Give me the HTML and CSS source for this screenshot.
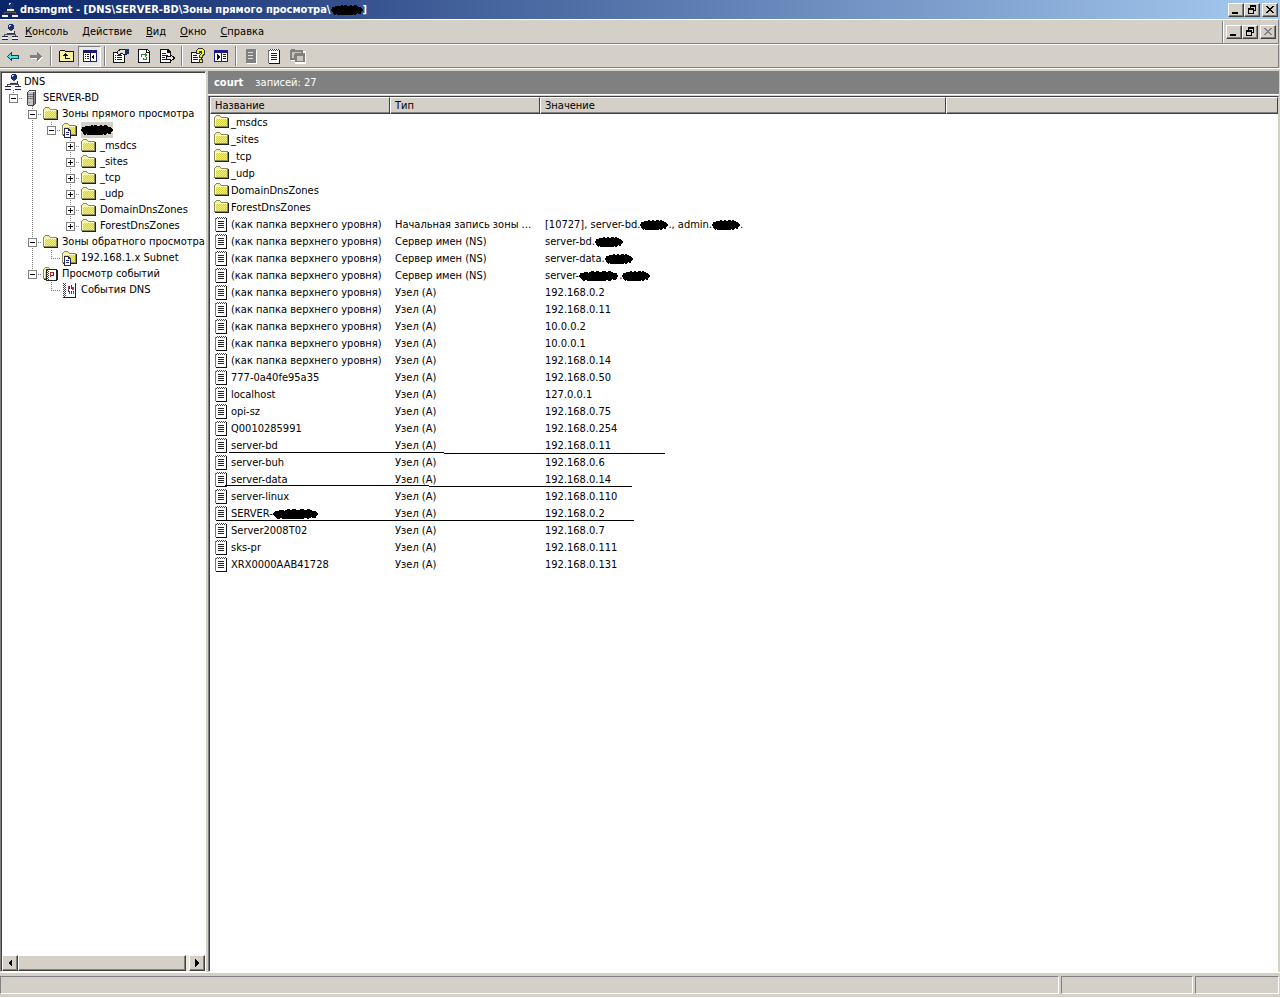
FILE: index.html
```html
<!DOCTYPE html>
<html lang="ru">
<head>
  <meta charset="UTF-8">
  <meta name="viewport" content="width=device-width, initial-scale=1.0">
  <title>dnsmgmt</title>
  <link rel="stylesheet" href="styles.css">
</head>
<body>
  <!-- icon set -->
  <svg class="sprite" aria-hidden="true">
    <defs>
      <pattern id="dither" width="2" height="2" patternUnits="userSpaceOnUse">
        <rect width="2" height="2" fill="#f4f07c"/><path d="M0 0h1v1h-1zM1 1h1v1h-1z" fill="#d6d23c"/>
      </pattern>
      <pattern id="spiral" width="2" height="2" patternUnits="userSpaceOnUse">
        <rect width="2" height="2" fill="#fff"/><path d="M0 0h1v1h-1zM1 1h1v1h-1z" fill="#444"/>
      </pattern>
    </defs>
    <symbol id="dns" viewBox="0 0 16 16">
      <circle cx="9" cy="3" r="3" fill="#17306f"/><path d="M7 1h2v1H8v1H7z" fill="#c8d8f4"/>
      <path d="M8 6h2v2H8zM2 10h12v1H2zM2 10h1v2H2zM13 10h1v2h-1z" fill="#555"/>
      <path d="M5 7h8v3H5z" fill="#e8e8f0"/><path d="M5 9h8v1H5zM12 7h1v3h-1z" fill="#333"/>
      <path d="M0 12h6v3H0zM10 12h6v3h-6z" fill="#f0f0fa"/><path d="M0 12h6v1H0zM10 12h6v1h-6zM0 15h6v1H0zM10 15h6v1h-6z" fill="#23235f"/>
    </symbol>
    <symbol id="server" viewBox="0 0 16 16">
      <path d="M4 1h1V0h7v14h-1v1h-1v1H4v-1H3V2h1z" fill="#444"/><path d="M4 2h5v13H4z" fill="#c4c4c4"/><path d="M5 1h6v1H5z" fill="#eee"/>
      <path d="M4 4h5v1H4zM4 6h5v1H4zM4 8h5v1H4z" fill="#777"/><path d="M5 12h1v1H5z" fill="#191"/>
      <path d="M10 2h1v12h-1z" fill="#8c8c8c"/>
    </symbol>
    <symbol id="folder" viewBox="0 0 16 16">
      <path d="M0 3h1V2h1V1h4v1h1v1h7v10H0z" fill="#8c8c58"/><path d="M1 4h12v8H1z" fill="url(#dither)"/>
      <path d="M2 2h4v1h1v1H1V3h1z" fill="#f6f29a"/><path d="M1 4h12v1H1zM1 4h1v8H1z" fill="#fffbc4"/>
      <path d="M14 4h1v10H1v-1h13z" fill="#222"/>
    </symbol>
    <symbol id="zone" viewBox="0 0 16 16">
      <use href="#folder"/>
      <path d="M2 6h5v1h1v1h1v8H2z" fill="#26264e"/><path d="M3 7h3v2h2v6H3z" fill="#fff"/>
      <path d="M4 10h3v1H4zM4 12h3v1H4z" fill="#2727a8"/>
    </symbol>
    <symbol id="record" viewBox="0 0 16 16">
      <path d="M2 2h11v14H2z" fill="#111"/><path d="M1 2h11v13H1z" fill="#777"/><path d="M2 3h10v12H2z" fill="#fff"/>
      <path d="M2 1h10v2H2z" fill="url(#spiral)"/>
      <path d="M4 5h6v1H4zM4 7h6v1H4zM4 9h6v1H4zM4 11h6v1H4z" fill="#222"/>
    </symbol>
    <symbol id="events" viewBox="0 0 16 16">
      <use href="#folder"/>
      <path d="M3 3h11v12H3z" fill="#222"/><path d="M4 4h9v10H4z" fill="#fff"/>
      <path d="M4 4h2v10H4z" fill="url(#spiral)"/><path d="M7 6h4v1H7zM7 6h1v5H7z" fill="#b22"/><path d="M10 6h1v4h-1zM8 9h3v1H8z" fill="#339"/>
    </symbol>
    <symbol id="eventlog" viewBox="0 0 16 16">
      <path d="M1 1h13v15H1z" fill="#222"/><path d="M2 1h11v14H2z" fill="#fff"/><path d="M1 1h3v14H1z" fill="url(#spiral)"/>
      <path d="M6 4h1v4H6zM10 5h2v3h-2zM7 9h1v3H7zM11 9h1v3h-1z" fill="#b33"/><path d="M7 4h1v3H7zM9 3h1v4H9zM9 9h1v3H9zM6 8h1v2H6z" fill="#339"/>
    </symbol>
    <symbol id="back" viewBox="0 0 16 16">
      <path d="M2.500 8.500l4-4v2.500h7v3h-7v2.500z" fill="#4fe0e0" stroke="#034a5a"/>
    </symbol>
    <symbol id="forward" viewBox="0 0 16 16">
      <path d="M15 9l-5 5v-3H3v-1h7z" fill="#fff"/><path d="M14 8L9 4v3H2v3h7v3z" fill="#808080"/>
    </symbol>
    <symbol id="up" viewBox="0 0 16 16">
      <path d="M.5 3.500l1-1h4l1 1h8v10H.5z" fill="#f8f29a" stroke="#111"/>
      <path d="M6 5l3 3H7v2h4v1H6V8H3z" fill="#111"/>
    </symbol>
    <symbol id="tree" viewBox="0 0 16 16">
      <path d="M1 2h14v12H1z" fill="#1a1a66"/><path d="M2 5h6v8H2zM9 5h5v8H9z" fill="#fff"/>
      <path d="M3 6h1v1H3zM5 6h2v1H5zM3 8h1v1H3zM5 8h2v1H5zM3 10h1v1H3zM5 10h2v1H5z" fill="#222"/><path d="M12 6v6L9 9z" fill="#111"/>
    </symbol>
    <symbol id="actions" viewBox="0 0 16 16">
      <path d="M1 2h14v12H1z" fill="#1a1a88"/><path d="M2 5h6v8H2zM9 5h5v8H9z" fill="#fff"/>
      <path d="M10 6h3v1h-3zM10 8h3v1h-3zM10 10h3v1h-3z" fill="#222"/><path d="M4 6v6l3-3z" fill="#111"/>
    </symbol>
    <symbol id="props" viewBox="0 0 16 16">
      <path d="M.5 4.500h11v10H.5z" fill="#fff" stroke="#111"/><path d="M2 7h1v1H2zM4 7h5v1H4zM2 9h1v1H2zM4 9h5v1H4zM2 11h1v1H2zM4 11h5v1H4z" fill="#222"/>
      <path d="M5 3l3-2h5v5h-3L9 5 6 7 4 5z" fill="#ddd" stroke="#222"/><path d="M12 1h4v5h-4z" fill="#17306f"/>
    </symbol>
    <symbol id="refresh" viewBox="0 0 16 16">
      <path d="M2 1h9l3 3v11H2z" fill="#111"/><path d="M3 2h7v3h3v9H3z" fill="#fff"/><path d="M11 2h1v1h1v1h-2z" fill="#fff"/>
      <path d="M5 6h4V5l2 2-2 2V7H6v2H5zM10 9h1v3H8v1l-2-2 2-2v2h2z" fill="#2a8a3a"/>
    </symbol>
    <symbol id="export" viewBox="0 0 16 16">
      <path d="M1 1h8l3 3v11H1z" fill="#111"/><path d="M2 2h6v3h3v9H2z" fill="#fff"/><path d="M3 5h4v1H3zM3 7h6v1H3zM3 9h3v1H3zM3 11h5v1H3z" fill="#222"/>
      <path d="M7.500 8.500h4v-2l4 3.500-4 3.500v-2h-4z" fill="#e6e6e6" stroke="#111"/>
    </symbol>
    <symbol id="help" viewBox="0 0 16 16">
      <path d="M1.500 4.500h10v10h-10z" fill="#fff" stroke="#111"/><path d="M3 7h4v1H3zM3 9h5v1H3zM3 11h5v1H3z" fill="#222"/>
      <path d="M6 2h1V1h1V0h5v1h1v1h1v5h-1v1h-1v2H9V7h1V6h1V4h-1v2H6zM9 11h4v4H9z" fill="#333"/>
      <path d="M7 2h1V1h5v1h1v4h-1v1h-1v2h-2V7h1V6h1V3H9v2H7zM10 12h2v2h-2z" fill="#f7ef28"/>
    </symbol>
    <symbol id="server-off" viewBox="0 0 16 16">
      <path d="M3 2h10v14H3z" fill="#fff"/><path d="M2 1h9l1 1v13H2z" fill="#808080"/><path d="M4 4h5v1H4zM4 7h5v1H4zM4 10h5v1H4z" fill="#ddd"/>
    </symbol>
    <symbol id="folders-off" viewBox="0 0 16 16">
      <path d="M1 3h15v13H5v-3H1z" fill="#fff"/><path d="M0 2h1V1h4v1h8v3h2v9H5v-2H0z" fill="#808080"/><path d="M2 4h9v1H5v1H4v4H2zM7 8h6v5H7z" fill="#c9c5bd"/>
    </symbol>
    <symbol id="min" viewBox="0 0 12 10"><path d="M2 7h6v2H2z" fill="currentColor"/></symbol>
    <symbol id="restore" viewBox="0 0 12 10">
      <path d="M4 0h6v6H8V5h1V2H5v1H4zM2 3h6v6H2zM3 5v3h4V5z" fill="currentColor" fill-rule="evenodd"/>
    </symbol>
    <symbol id="close" viewBox="0 0 12 10">
      <path d="M2 1h2v1h1v1h2V2h1V1h2v1H9v1H8v1H7v1h1v1h1v1h1v1H8V7H7V6H5v1H4v1H2V7h1V6h1V5h1V4H4V3H3V2H2z" fill="currentColor"/>
    </symbol>
    <symbol id="blot" viewBox="0 0 40 12" preserveAspectRatio="none">
      <path d="M0 6l2-4 3 0 2-1 3 1 3-2 3 1 2-1 4 1 3-1 3 1 3-1 3 2 3 0 1 2 2 2-2 2-1 3-4-1-2 2-3-1-4 2-3-1-4 1-4-1-3 1-3-2-3 1-2-3z"/>
    </symbol>
  </svg>

  <header class="titlebar">
    <svg class="icon"><use href="#dns"/></svg>
    <h1>dnsmgmt - [DNS\SERVER-BD\Зоны прямого просмотра\<svg class="blot w32"><use href="#blot"/></svg>]</h1>
    <div class="winbtns">
      <button class="bevel" aria-label="Свернуть"><svg><use href="#min"/></svg></button>
      <button class="bevel" aria-label="Восстановить"><svg><use href="#restore"/></svg></button>
      <button class="bevel close" aria-label="Закрыть"><svg><use href="#close"/></svg></button>
    </div>
  </header>

  <div class="menubar">
    <svg class="icon"><use href="#dns"/></svg>
    <nav class="menu">
      <button><u>К</u>онсоль</button>
      <button><u>Д</u>ействие</button>
      <button><u>В</u>ид</button>
      <button><u>О</u>кно</button>
      <button><u>С</u>правка</button>
    </nav>
    <div class="winbtns mdi">
      <button class="bevel" aria-label="Свернуть окно"><svg><use href="#min"/></svg></button>
      <button class="bevel" aria-label="Восстановить окно"><svg><use href="#restore"/></svg></button>
      <button class="bevel close" aria-label="Закрыть окно" disabled><svg><use href="#close"/></svg></button>
    </div>
  </div>

  <div class="toolbar">
    <button aria-label="Назад"><svg class="icon"><use href="#back"/></svg></button>
    <button aria-label="Вперед" disabled><svg class="icon"><use href="#forward"/></svg></button>
    <span class="sep"></span>
    <button aria-label="Вверх"><svg class="icon"><use href="#up"/></svg></button>
    <button class="pressed" aria-label="Дерево консоли"><svg class="icon"><use href="#tree"/></svg></button>
    <span class="sep"></span>
    <button aria-label="Свойства"><svg class="icon"><use href="#props"/></svg></button>
    <button aria-label="Обновить"><svg class="icon"><use href="#refresh"/></svg></button>
    <button aria-label="Экспорт списка"><svg class="icon"><use href="#export"/></svg></button>
    <span class="sep"></span>
    <button aria-label="Помощь"><svg class="icon"><use href="#help"/></svg></button>
    <button aria-label="Панель действий"><svg class="icon"><use href="#actions"/></svg></button>
    <span class="sep"></span>
    <button aria-label="Новый сервер" disabled><svg class="icon"><use href="#server-off"/></svg></button>
    <button aria-label="Новая запись"><svg class="icon"><use href="#record"/></svg></button>
    <button aria-label="Новая зона" disabled><svg class="icon"><use href="#folders-off"/></svg></button>
  </div>

  <main class="panes">
    <aside class="treepane">
      <div class="tree">
        <div class="node"><svg class="icon"><use href="#dns"/></svg><span>DNS</span></div>
        <ul>
          <li>
            <div class="node"><button class="exp minus" aria-label="Свернуть"></button><svg class="icon"><use href="#server"/></svg><span>SERVER-BD</span></div>
            <ul>
              <li>
                <div class="node"><button class="exp minus" aria-label="Свернуть"></button><svg class="icon"><use href="#folder"/></svg><span>Зоны прямого просмотра</span></div>
                <ul>
                  <li>
                    <div class="node"><button class="exp minus" aria-label="Свернуть"></button><svg class="icon"><use href="#zone"/></svg><span class="selected"><svg class="blot w32"><use href="#blot"/></svg></span></div>
                    <ul>
                      <li><div class="node"><button class="exp plus" aria-label="Развернуть"></button><svg class="icon"><use href="#folder"/></svg><span>_msdcs</span></div></li>
                      <li><div class="node"><button class="exp plus" aria-label="Развернуть"></button><svg class="icon"><use href="#folder"/></svg><span>_sites</span></div></li>
                      <li><div class="node"><button class="exp plus" aria-label="Развернуть"></button><svg class="icon"><use href="#folder"/></svg><span>_tcp</span></div></li>
                      <li><div class="node"><button class="exp plus" aria-label="Развернуть"></button><svg class="icon"><use href="#folder"/></svg><span>_udp</span></div></li>
                      <li><div class="node"><button class="exp plus" aria-label="Развернуть"></button><svg class="icon"><use href="#folder"/></svg><span>DomainDnsZones</span></div></li>
                      <li><div class="node"><button class="exp plus" aria-label="Развернуть"></button><svg class="icon"><use href="#folder"/></svg><span>ForestDnsZones</span></div></li>
                    </ul>
                  </li>
                </ul>
              </li>
              <li>
                <div class="node"><button class="exp minus" aria-label="Свернуть"></button><svg class="icon"><use href="#folder"/></svg><span>Зоны обратного просмотра</span></div>
                <ul>
                  <li><div class="node leaf"><svg class="icon"><use href="#zone"/></svg><span>192.168.1.x Subnet</span></div></li>
                </ul>
              </li>
              <li>
                <div class="node"><button class="exp minus" aria-label="Свернуть"></button><svg class="icon"><use href="#events"/></svg><span>Просмотр событий</span></div>
                <ul>
                  <li><div class="node leaf"><svg class="icon"><use href="#eventlog"/></svg><span>События DNS</span></div></li>
                </ul>
              </li>
            </ul>
          </li>
        </ul>
      </div>
      <div class="scrollbar">
        <button class="bevel" aria-label="Влево"><svg viewBox="0 0 8 8"><path d="M6 0v8L2 4z"/></svg></button>
        <div class="thumb bevel"></div>
        <button class="bevel" aria-label="Вправо"><svg viewBox="0 0 8 8"><path d="M2 0v8l4-4z"/></svg></button>
      </div>
    </aside>

    <section class="listpane">
      <div class="caption"><b>court</b><span>записей: 27</span></div>
      <div class="list">
        <table>
          <colgroup><col class="c-name"><col class="c-type"><col class="c-value"><col></colgroup>
          <thead>
            <tr><th>Название</th><th>Тип</th><th>Значение</th><th></th></tr>
          </thead>
          <tbody>
            <tr class="dir"><td><svg class="icon"><use href="#folder"/></svg>_msdcs</td><td></td><td></td><td></td></tr>
            <tr class="dir"><td><svg class="icon"><use href="#folder"/></svg>_sites</td><td></td><td></td><td></td></tr>
            <tr class="dir"><td><svg class="icon"><use href="#folder"/></svg>_tcp</td><td></td><td></td><td></td></tr>
            <tr class="dir"><td><svg class="icon"><use href="#folder"/></svg>_udp</td><td></td><td></td><td></td></tr>
            <tr class="dir"><td><svg class="icon"><use href="#folder"/></svg>DomainDnsZones</td><td></td><td></td><td></td></tr>
            <tr class="dir"><td><svg class="icon"><use href="#folder"/></svg>ForestDnsZones</td><td></td><td></td><td></td></tr>
            <tr><td><svg class="icon"><use href="#record"/></svg>(как папка верхнего уровня)</td><td>Начальная запись зоны ...</td><td>[10727], server-bd.<svg class="blot w28"><use href="#blot"/></svg>., admin.<svg class="blot w28"><use href="#blot"/></svg>.</td><td></td></tr>
            <tr><td><svg class="icon"><use href="#record"/></svg>(как папка верхнего уровня)</td><td>Сервер имен (NS)</td><td>server-bd.<svg class="blot w28"><use href="#blot"/></svg></td><td></td></tr>
            <tr><td><svg class="icon"><use href="#record"/></svg>(как папка верхнего уровня)</td><td>Сервер имен (NS)</td><td>server-data.<svg class="blot w28"><use href="#blot"/></svg></td><td></td></tr>
            <tr><td><svg class="icon"><use href="#record"/></svg>(как папка верхнего уровня)</td><td>Сервер имен (NS)</td><td>server-<svg class="blot w40"><use href="#blot"/></svg>.<svg class="blot w28"><use href="#blot"/></svg></td><td></td></tr>
            <tr><td><svg class="icon"><use href="#record"/></svg>(как папка верхнего уровня)</td><td>Узел (A)</td><td>192.168.0.2</td><td></td></tr>
            <tr><td><svg class="icon"><use href="#record"/></svg>(как папка верхнего уровня)</td><td>Узел (A)</td><td>192.168.0.11</td><td></td></tr>
            <tr><td><svg class="icon"><use href="#record"/></svg>(как папка верхнего уровня)</td><td>Узел (A)</td><td>10.0.0.2</td><td></td></tr>
            <tr><td><svg class="icon"><use href="#record"/></svg>(как папка верхнего уровня)</td><td>Узел (A)</td><td>10.0.0.1</td><td></td></tr>
            <tr><td><svg class="icon"><use href="#record"/></svg>(как папка верхнего уровня)</td><td>Узел (A)</td><td>192.168.0.14</td><td></td></tr>
            <tr><td><svg class="icon"><use href="#record"/></svg>777-0a40fe95a35</td><td>Узел (A)</td><td>192.168.0.50</td><td></td></tr>
            <tr><td><svg class="icon"><use href="#record"/></svg>localhost</td><td>Узел (A)</td><td>127.0.0.1</td><td></td></tr>
            <tr><td><svg class="icon"><use href="#record"/></svg>opi-sz</td><td>Узел (A)</td><td>192.168.0.75</td><td></td></tr>
            <tr><td><svg class="icon"><use href="#record"/></svg>Q0010285991</td><td>Узел (A)</td><td>192.168.0.254</td><td></td></tr>
            <tr class="marked"><td><svg class="icon"><use href="#record"/></svg>server-bd<svg class="mark"><path d="M14 1.500h215M229 2.500h221"/></svg></td><td>Узел (A)</td><td>192.168.0.11</td><td></td></tr>
            <tr><td><svg class="icon"><use href="#record"/></svg>server-buh</td><td>Узел (A)</td><td>192.168.0.6</td><td></td></tr>
            <tr class="marked"><td><svg class="icon"><use href="#record"/></svg>server-data<svg class="mark"><path d="M10 .5h204M214 1.500h203"/></svg></td><td>Узел (A)</td><td>192.168.0.14</td><td></td></tr>
            <tr><td><svg class="icon"><use href="#record"/></svg>server-linux</td><td>Узел (A)</td><td>192.168.0.110</td><td></td></tr>
            <tr class="marked"><td><svg class="icon"><use href="#record"/></svg>SERVER-<svg class="blot w46"><use href="#blot"/></svg><svg class="mark"><path d="M2 1.500h417"/></svg></td><td>Узел (A)</td><td>192.168.0.2</td><td></td></tr>
            <tr><td><svg class="icon"><use href="#record"/></svg>Server2008T02</td><td>Узел (A)</td><td>192.168.0.7</td><td></td></tr>
            <tr><td><svg class="icon"><use href="#record"/></svg>sks-pr</td><td>Узел (A)</td><td>192.168.0.111</td><td></td></tr>
            <tr><td><svg class="icon"><use href="#record"/></svg>XRX0000AAB41728</td><td>Узел (A)</td><td>192.168.0.131</td><td></td></tr>
          </tbody>
        </table>
      </div>
    </section>
  </main>

  <footer class="statusbar">
    <span class="main"></span>
    <span class="mid"></span>
    <span class="end"></span>
  </footer>
</body>
</html>
```

FILE: styles.css
```css
* {
  box-sizing: border-box;
}

body {
  margin: 0;
  height: 100vh;
  display: flex;
  flex-direction: column;
  overflow: hidden;
  background: #d4d0c8;
  color: #000;
  font: 11px/16px "DejaVu Sans Condensed", Tahoma, sans-serif;
  white-space: nowrap;
}

button {
  margin: 0;
  padding: 0;
  border: 0;
  background: none;
  color: #000;
  font: inherit;
}

svg {
  shape-rendering: crispEdges;
}

.sprite {
  position: absolute;
  width: 0;
  height: 0;
}

.icon {
  width: 16px;
  height: 16px;
  flex: none;
}

.bevel {
  background: #d4d0c8;
  border: 1px solid;
  border-color: #fff #404040 #404040 #fff;
  box-shadow: inset -1px -1px #808080;
}

/* title and menu */
.titlebar {
  display: flex;
  align-items: center;
  height: 19px;
  padding: 0 2px;
  gap: 2px;
  background: linear-gradient(to right, #0a246a, #a6caf0);
  color: #fff;
}

.titlebar h1 {
  flex: 1;
  margin: 0;
  font-size: 11px;
  font-weight: bold;
}

.winbtns {
  display: flex;
}

.winbtns button {
  display: flex;
  width: 16px;
  height: 14px;
  padding: 1px;
}

.winbtns svg {
  width: 12px;
  height: 10px;
}

.winbtns .close {
  margin-left: 2px;
}

.winbtns button:disabled {
  color: #808080;
}

.menubar {
  display: flex;
  align-items: center;
  height: 25px;
  margin-right: 1px;
  padding: 1px 0 0 2px;
  border-top: 1px solid #fff;
  border-bottom: 1px solid #808080;
  border-right: 1px solid #808080;
}

.menu {
  flex: 1;
  display: flex;
}

.menu button {
  padding: 0 7px;
}

.mdi {
  align-self: stretch;
  align-items: center;
  padding: 0 2px 0 3px;
  border-left: 1px solid #808080;
  box-shadow: inset 1px 0 #fff;
}

.toolbar {
  display: flex;
  align-items: center;
  height: 24px;
  margin-right: 1px;
  padding-left: 1px;
  border-top: 1px solid #fff;
  border-bottom: 1px solid #808080;
  border-right: 1px solid #808080;
}

.toolbar button {
  display: flex;
  align-items: center;
  justify-content: center;
  width: 23px;
  height: 21px;
}

.toolbar .pressed {
  background: #eae8e4;
  border: 1px solid;
  border-color: #808080 #fff #fff #808080;
}

.sep {
  width: 8px;
  height: 20px;
  background: linear-gradient(to right, transparent 3px, #808080 3px 4px, #fff 4px 5px, transparent 5px);
}

/* panes */
.panes {
  flex: 1;
  display: flex;
  gap: 2px;
  min-height: 0;
  padding: 2px 1px 0 0;
  border-top: 1px solid #fff;
}

.treepane {
  width: 206px;
  display: flex;
  flex-direction: column;
  border: 1px solid;
  border-color: #808080 #fff #fff #808080;
  box-shadow: inset 1px 1px #404040;
  background: #fff;
  padding: 2px 0 0 1px;
}

.tree {
  flex: 1;
  padding-left: 3px;
  overflow: hidden;
}

.tree ul {
  list-style: none;
  margin: 0;
  padding: 0;
}

.tree ul ul {
  padding-left: 19px;
}

/* dotted connectors */
.tree li {
  background: repeating-linear-gradient(#808080 0 1px, transparent 1px 2px) 8px 0 / 1px 100% no-repeat;
}

.tree li:last-child {
  background-size: 1px 8px;
}

.tree li > .node {
  background: repeating-linear-gradient(to right, #808080 0 1px, transparent 1px 2px) 8px 8px / 10px 1px no-repeat;
}

.node {
  display: flex;
  align-items: center;
  height: 16px;
}

.node span {
  margin-left: 3px;
}

.node .selected {
  display: flex;
  align-items: center;
  height: 16px;
  background: #d4d0c8;
}

.leaf {
  padding-left: 19px;
}

.exp {
  width: 9px;
  height: 9px;
  margin: 0 6px 0 4px;
  flex: none;
  border: 1px solid #808080;
}

.minus {
  background: linear-gradient(#000, #000) center / 5px 1px no-repeat #fff;
}

.plus {
  background: linear-gradient(#000, #000) center / 5px 1px no-repeat, linear-gradient(#000, #000) center / 1px 5px no-repeat #fff;
}

.scrollbar {
  display: flex;
  height: 16px;
  background: #eae8e4;
}

.scrollbar button {
  display: flex;
  align-items: center;
  justify-content: center;
  width: 16px;
}

.scrollbar svg {
  width: 8px;
  height: 8px;
}

.thumb {
  flex: 1;
  margin-right: 3px;
}

.listpane {
  flex: 1;
  min-width: 0;
  display: flex;
  flex-direction: column;
}

.caption {
  display: flex;
  align-items: center;
  gap: 12px;
  height: 24px;
  padding: 1px 6px 0;
  background: #808080;
  border-bottom: 1px solid #fff;
  color: #fff;
}

.list {
  flex: 1;
  margin-top: 1px;
  background: #fff;
  border: 1px solid;
  border-color: #404040 #d4d0c8 #fff #808080;
  box-shadow: inset 1px 0 #404040;
  padding-left: 1px;
}

table {
  width: 100%;
  table-layout: fixed;
  border-collapse: separate;
  border-spacing: 0;
}

.c-name {
  width: 180px;
}

.c-type {
  width: 150px;
}

.c-value {
  width: 406px;
}

th {
  height: 17px;
  padding: 0 4px;
  background: #d4d0c8;
  border: 1px solid;
  border-color: #fff #404040 #404040 #fff;
  box-shadow: inset 0 -1px #808080;
  font-weight: normal;
  line-height: 14px;
  text-align: left;
}

td {
  height: 17px;
  padding: 0 5px;
  line-height: 17px;
}

td:first-child {
  padding-left: 4px;
}

td .icon {
  margin-right: 1px;
  vertical-align: top;
}

.blot {
  height: 10px;
  vertical-align: middle;
  fill: #000;
}

.w28 {
  width: 28px;
}

.w32 {
  width: 32px;
}

.w40 {
  width: 40px;
}

.w46 {
  width: 46px;
}

/* hand drawn underlines over the rows */
.marked td:first-child {
  position: relative;
}

.mark {
  position: absolute;
  left: 5px;
  top: 14px;
  width: 460px;
  height: 4px;
  stroke: #000;
}

.statusbar {
  display: flex;
  gap: 2px;
  height: 26px;
  padding: 3px 1px 3px 0;
  border-top: 1px solid #fff;
  border-bottom: 1px solid #fff;
}

.statusbar span {
  border: 1px solid;
  border-color: #808080 #fff #fff #808080;
}

.statusbar .main {
  flex: 1;
}

.statusbar .mid {
  width: 132px;
}

.statusbar .end {
  width: 84px;
}
```
